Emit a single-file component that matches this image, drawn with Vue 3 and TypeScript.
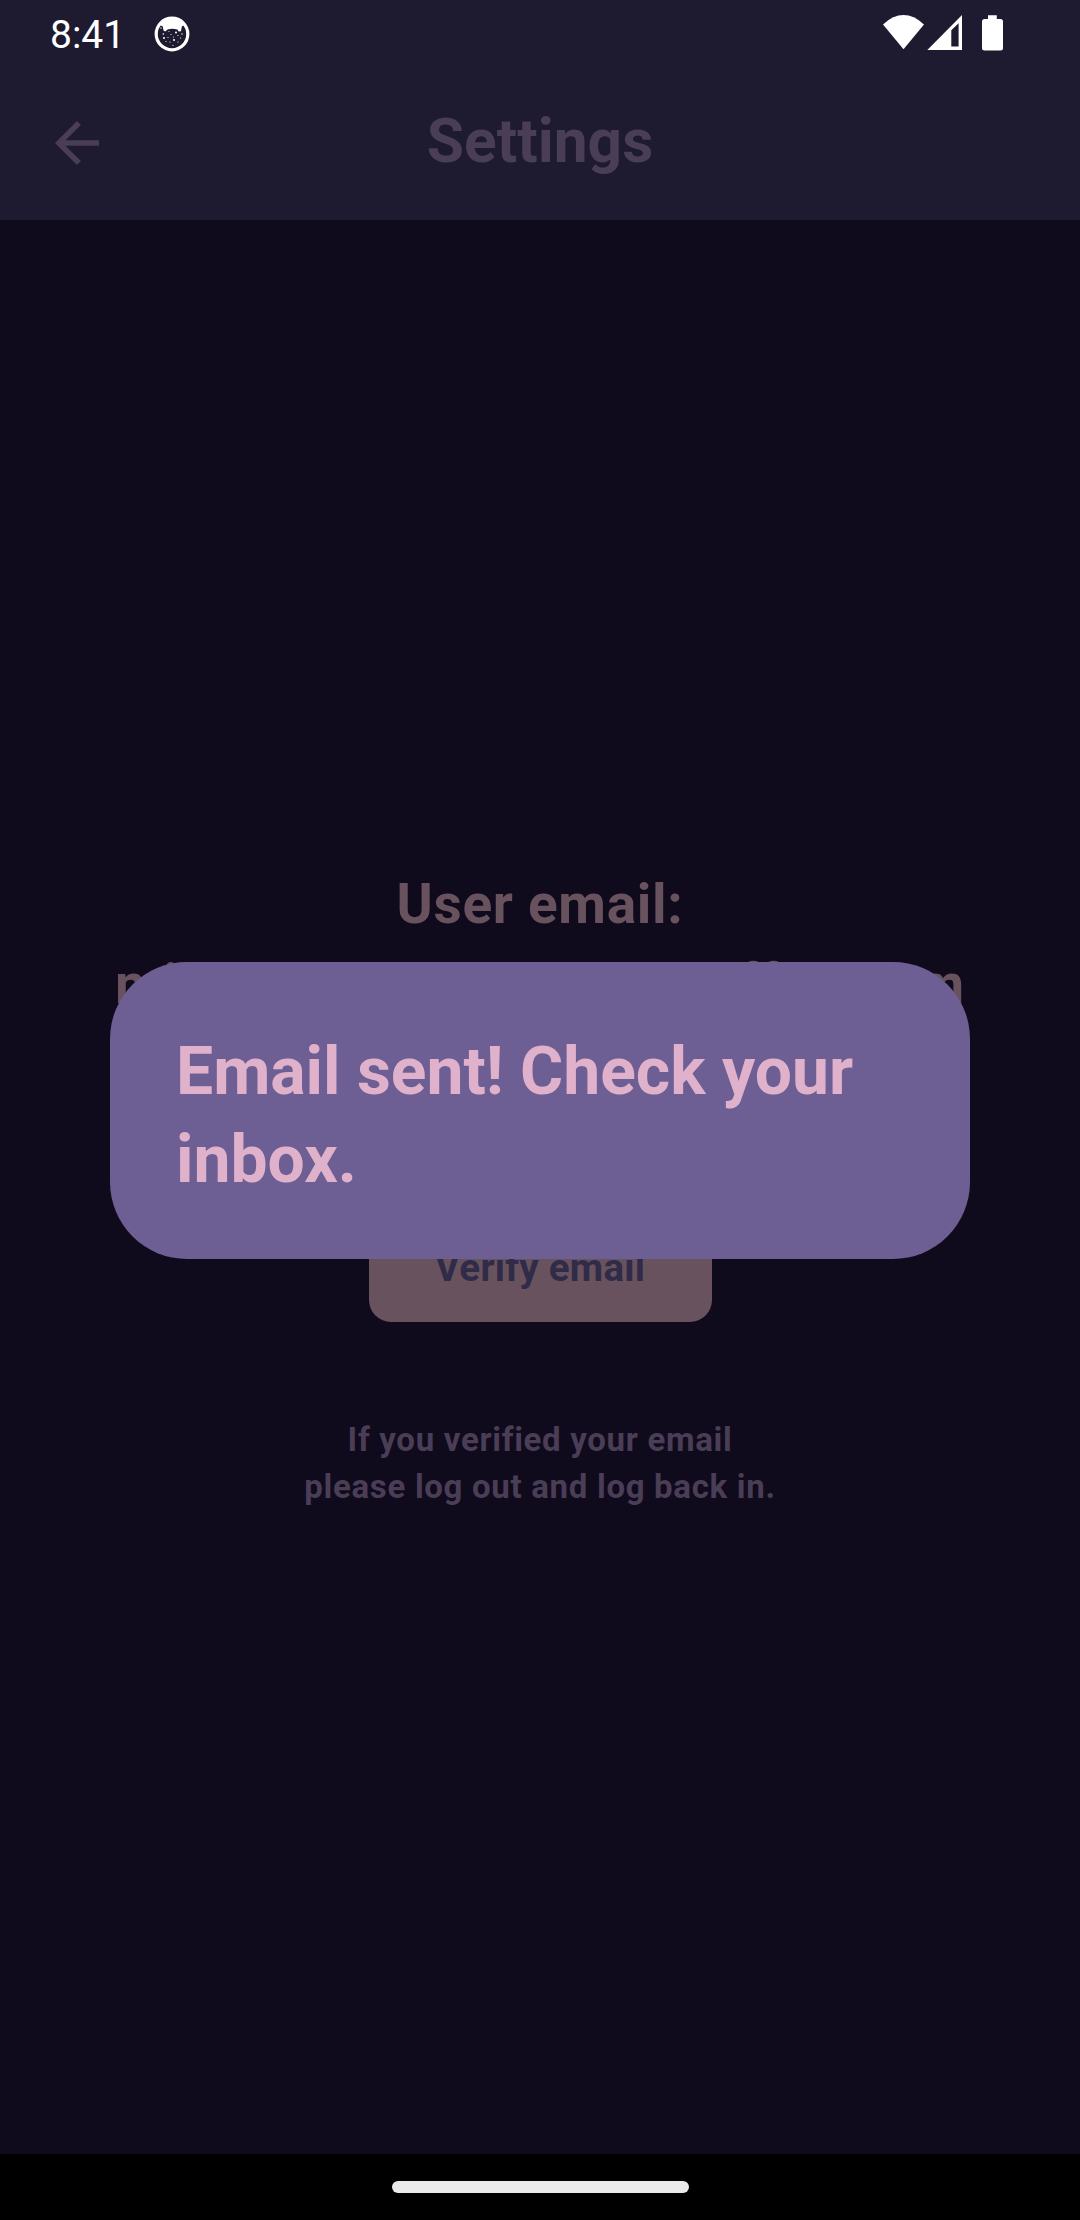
<script setup lang="ts">
import { ref } from 'vue'

const time = ref('8:41')
const email = ref('michaelc.sanderson@coffee.com')
const hint = ['If you verified your email', 'please log out and log back in.']
const message = ref('Email sent! Check your inbox.')

const specks: [number, number, number][] = [
  [7, 12, 0.7], [9.3, 18, 0.8], [11.5, 14.5, 0.6], [15, 15.5, 0.5],
  [17, 18.5, 0.6], [19.5, 21, 0.5], [22, 16.5, 1], [24, 19.5, 0.6],
  [28, 18, 0.7], [26.5, 22, 0.6], [14, 21.5, 0.6], [10, 22, 1],
  [20, 24, 1], [16, 26, 0.6], [12, 25.5, 0.6], [24, 26, 0.6], [19, 29.5, 0.6],
]
</script>

<template>
  <main class="screen">
    <header class="top">
      <div class="status">
        <span class="clock">{{ time }}</span>
        <svg class="debug" viewBox="0 0 36 36">
          <circle cx="18" cy="18" r="15.8" fill="none" stroke="#fff" stroke-width="3.2" />
          <path d="M6 9 A15 15 0 0 1 30 9 L27.8 10.5 L27 15.3 L24.8 15.5 L23.3 13.4 Q18 12.2 13.6 13.4 L11.2 15.5 L9.5 14.6 L8.8 10.5Z" fill="#fff" />
          <circle v-for="(s, i) in specks" :key="i" :cx="s[0]" :cy="s[1]" :r="s[2]" fill="#fff" />
        </svg>
        <svg class="signals" viewBox="0 0 122 36">
          <path d="M0 9.4 Q20.5 -9.2 41 9.4 L20.5 34.3Z" fill="#fff" />
          <path d="M44.3 35 L79 0 V35Z M68.3 15.3 V31.5 H75.6 V8.3Z" fill="#fff" fill-rule="evenodd" />
          <path d="M105 0.3 H113.8 V4 H117.5 Q120 4 120 6.5 V33 Q120 35.5 117.5 35.5 H101.5 Q99 35.5 99 33 V6.5 Q99 4 101.5 4 H105Z" fill="#fff" />
        </svg>
      </div>
      <div class="bar">
        <svg class="back" viewBox="0 0 24 24">
          <path d="M20 11H7.83l5.59-5.59L12 4l-8 8 8 8 1.41-1.41L7.83 13H20v-2z" fill="#4a3d56" />
        </svg>
        <h1>Settings</h1>
      </div>
    </header>

    <section class="content">
      <p class="account">User email:<br /><span>{{ email }}</span></p>
      <button class="verify" type="button">Verify email</button>
      <p class="hint">{{ hint[0] }}<br />{{ hint[1] }}</p>
    </section>

    <footer class="nav"><div class="pill"></div></footer>

    <div class="dialog" role="alertdialog">{{ message }}</div>
  </main>
</template>

<style>
body {
  margin: 0;
  background: #100a1d;
}
</style>

<style scoped>
.screen {
  position: relative;
  display: flex;
  flex-direction: column;
  width: 1080px;
  height: 2220px;
  overflow: hidden;
  background: #100a1d;
  font-family: Roboto, sans-serif;
  font-weight: 700;
}
.top {
  height: 220px;
  flex: none;
  background: #1e1a2f;
}
.status {
  display: flex;
  align-items: center;
  height: 66px;
  box-sizing: border-box;
  padding: 0 76px 0 50px;
  color: #fff;
}
.clock {
  width: 104px;
  font-size: 39px;
  font-weight: 400;
  line-height: 66px;
  margin-top: 4px;
}
.debug {
  width: 36px;
  height: 36px;
  margin-top: 1px;
}
.signals {
  width: 122px;
  height: 36px;
  margin-left: auto;
  margin-right: -1px;
}
.bar {
  display: grid;
  grid-template-columns: 66px 1fr 66px;
  align-items: center;
  padding: 44px 44px 0;
}
.back {
  width: 66px;
  height: 66px;
}
h1 {
  margin: -2px 0 0;
  color: #4a3d56;
  font-size: 60.5px;
  font-weight: 700;
  line-height: 66px;
  text-align: center;
}
.content {
  display: flex;
  flex: 1;
  flex-direction: column;
  align-items: center;
  padding-top: 644px;
  text-align: center;
}
p {
  margin: 0;
}
.account {
  color: #68525d;
  font-size: 55px;
  line-height: 80px;
  letter-spacing: 0.6875px;
  white-space: nowrap;
}
.verify {
  width: 343px;
  height: 110px;
  margin-top: 188px;
  padding: 0;
  border: 0;
  border-radius: 22px;
  background: #68525d;
  color: #302b49;
  font: 700 38.5px/112px Roboto, sans-serif;
  letter-spacing: 0.275px;
}
.hint {
  margin-top: 94px;
  color: #4a3d56;
  font-size: 33px;
  line-height: 47px;
  letter-spacing: 0.6875px;
}
.nav {
  display: flex;
  justify-content: center;
  height: 66px;
  flex: none;
  background: #000;
}
.pill {
  width: 297px;
  height: 12px;
  margin-top: 27px;
  border-radius: 6px;
  background: #ebebeb;
}
.dialog {
  position: absolute;
  top: 961.5px;
  left: 110px;
  width: 860px;
  height: 297px;
  box-sizing: border-box;
  padding: 66px;
  border-radius: 77px;
  background: #6d5e94;
  color: #dfb1cb;
  font-size: 66px;
  line-height: 88px;
}
</style>
